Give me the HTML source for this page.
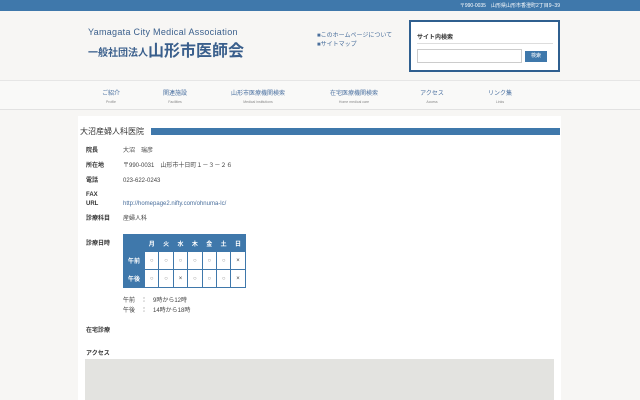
<!DOCTYPE html><html><head><meta charset="utf-8"><style>
*{margin:0;padding:0;box-sizing:border-box}
body{width:640px;height:400px;overflow:hidden;background:#f7f6f4;font-family:"Liberation Sans","Noto Sans CJK JP",sans-serif;color:#333;position:relative}
.a{position:absolute;white-space:nowrap}
.top{left:0;top:0;width:640px;height:11px;background:#3f78ab}
.nav{left:0;top:80px;width:640px;height:30px;background:#f9f9f8;border-top:1px solid #e6e6e6;border-bottom:1px solid #e2e2e2}
.ni{font-size:6px;color:#4a70a0;text-align:center;width:80px}
.ni small{display:block;font-size:3.5px;color:#888;margin-top:3px}
.main{left:78px;top:116px;width:483px;height:284px;background:#fff}
.lb{font-size:6px;font-weight:bold;color:#333;line-height:8px}
.v{font-size:6px;color:#444;line-height:8px}
table{position:absolute;left:123px;top:234px;border-collapse:collapse}
td{border:1px solid #3f78ab;width:14.4px;height:18px;font-size:6px;text-align:center;color:#888}
tr:first-child td{height:17px;background:#3f78ab;color:#fff;font-weight:bold}
td.h{background:#3f78ab;color:#fff;font-weight:bold;width:21px}
</style></head><body>
<div class="a top"></div>
<div class="a" style="right:80px;top:2px;font-size:5px;color:#fff">〒990-0035　山形県山形市香澄町2丁目9−39</div>
<div class="a" style="left:88px;top:27px;font-size:9px;color:#3a5f8c;letter-spacing:.3px">Yamagata City Medical Association</div>
<div class="a" style="left:88px;top:37px;font-size:16px;font-weight:bold;color:#3a5f8c"><span style="font-size:10px">一般社団法人</span>山形市医師会</div>
<div class="a" style="left:317px;top:32px;font-size:6px;color:#4a6f9c;line-height:9px">■このホームページについて<br>■サイトマップ</div>
<div class="a" style="left:409px;top:20px;width:151px;height:52px;border:2px solid #2f5f8f;background:#fff">
<div class="a" style="left:6px;top:10px;font-size:6px;font-weight:bold;color:#333">サイト内検索</div>
<div class="a" style="left:6px;top:21px;width:136px;border-top:1px solid #ddd"></div>
<div class="a" style="left:6px;top:27px;width:105px;height:14px;border:1px solid #ccc"></div>
<div class="a" style="left:114px;top:29px;width:22px;height:11px;background:#3f78ab;color:#fff;font-size:5px;text-align:center;line-height:11px">検索</div></div>
<div class="a nav"></div>
<div class="a ni" style="left:71px;top:88px">ご紹介<small>Profile</small></div>
<div class="a ni" style="left:135px;top:88px">関連施設<small>Facilities</small></div>
<div class="a ni" style="left:218px;top:88px">山形市医療機関検索<small>Medical institutions</small></div>
<div class="a ni" style="left:314px;top:88px">在宅医療機関検索<small>Home medical care</small></div>
<div class="a ni" style="left:392px;top:88px">アクセス<small>Access</small></div>
<div class="a ni" style="left:460px;top:88px">リンク集<small>Links</small></div>
<div class="a main"></div>
<div class="a" style="left:80px;top:126px;font-size:8px;color:#333">大沼産婦人科医院</div>
<div class="a" style="left:151px;top:128px;width:409px;height:7px;background:#3f78ab"></div>
<div class="a lb" style="left:86px;top:147px">院長</div><div class="a v" style="left:123px;top:147px">大沼　瑞彦</div>
<div class="a lb" style="left:86px;top:162px">所在地</div><div class="a v" style="left:123px;top:162px">〒990-0031　山形市十日町１－３－２６</div>
<div class="a lb" style="left:86px;top:177px">電話</div><div class="a v" style="left:123px;top:177px">023-622-0243</div>
<div class="a lb" style="left:86px;top:191px">FAX</div>
<div class="a lb" style="left:86px;top:200px">URL</div><div class="a v" style="left:123px;top:200px;color:#4a6f9c">http://homepage2.nifty.com/ohnuma-lc/</div>
<div class="a lb" style="left:86px;top:215px">診療科目</div><div class="a v" style="left:123px;top:215px">産婦人科</div>
<div class="a lb" style="left:86px;top:240px">診療日時</div>
<table>
<tr><td class="h"></td><td>月</td><td>火</td><td>水</td><td>木</td><td>金</td><td>土</td><td>日</td></tr>
<tr><td class="h">午前</td><td>○</td><td>○</td><td>○</td><td>○</td><td>○</td><td>○</td><td style="color:#444">×</td></tr>
<tr><td class="h">午後</td><td>○</td><td>○</td><td style="color:#444">×</td><td>○</td><td>○</td><td>○</td><td style="color:#444">×</td></tr>
</table>
<div class="a v" style="left:123px;top:296px;line-height:10px">午前　：　9時から12時<br>午後　：　14時から18時</div>
<div class="a lb" style="left:86px;top:327px">在宅診療</div>
<div class="a lb" style="left:86px;top:350px">アクセス</div>
<div class="a" style="left:85px;top:359px;width:469px;height:41px;background:#e3e3e0"></div>
</body></html>
